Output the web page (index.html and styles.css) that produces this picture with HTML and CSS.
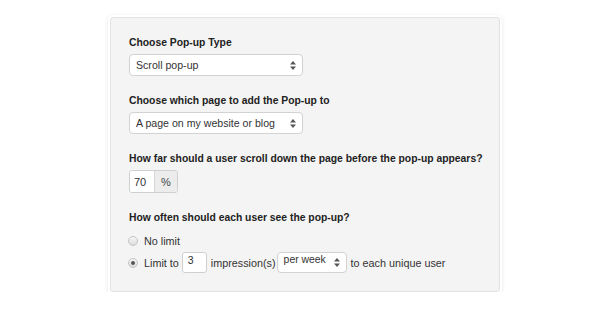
FILE: index.html
```html
<!DOCTYPE html>
<html>
<head>
<meta charset="utf-8">
<link rel="stylesheet" href="styles.css">
</head>
<body>
<div class="card">
  <div class="group">
    <div class="label">Choose Pop-up Type</div>
    <div class="select wide">
      <span class="select-text">Scroll pop-up</span>
      <svg class="arrows" width="6" height="9" viewBox="0 0 6 9"><path d="M3 0 L6 3.5 L0 3.5 Z M3 9 L6 5.5 L0 5.5 Z" fill="#555"/></svg>
    </div>
  </div>
  <div class="group">
    <div class="label">Choose which page to add the Pop-up to</div>
    <div class="select wide">
      <span class="select-text">A page on my website or blog</span>
      <svg class="arrows" width="6" height="9" viewBox="0 0 6 9"><path d="M3 0 L6 3.5 L0 3.5 Z M3 9 L6 5.5 L0 5.5 Z" fill="#555"/></svg>
    </div>
  </div>
  <div class="group">
    <div class="label">How far should a user scroll down the page before the pop-up appears?</div>
    <div class="input-group">
      <span class="ig-input">70</span>
      <span class="ig-addon">%</span>
    </div>
  </div>
  <div class="group last">
    <div class="label radios-label">How often should each user see the pop-up?</div>
    <div class="radio-row first">
      <span class="radio"></span>
      <span class="rtext">No limit</span>
    </div>
    <div class="radio-row">
      <span class="radio checked"></span>
      <span class="rtext">Limit to</span>
      <span class="small-input">3</span>
      <span class="rtext">impression(s)</span>
      <div class="select narrow">
        <span class="select-text up">per week</span>
        <svg class="arrows" width="6" height="9" viewBox="0 0 6 9"><path d="M3 0 L6 3.5 L0 3.5 Z M3 9 L6 5.5 L0 5.5 Z" fill="#555"/></svg>
      </div>
      <span class="rtext">to each unique user</span>
    </div>
  </div>
</div>
</body>
</html>
```
FILE: styles.css
```css
* { box-sizing: border-box; }
body {
  margin: 0;
  background: #fff;
  font-family: "Liberation Sans", Arial, Helvetica, sans-serif;
  color: #333;
}
.card {
  margin: 17px 0 0 110px;
  width: 390px;
  height: 275px;
  background: #f4f4f4;
  border: 1px solid #e2e2e2;
  border-radius: 3px;
  box-shadow: 0 0 0 2px #fff, 0 1px 4px 2px rgba(0,0,0,0.10);
  padding: 18px 0 0 18px;
}
.group { margin-bottom: 18px; }
.group.last { margin-bottom: 0; }
.label {
  font-size: 10.35px;
  font-weight: bold;
  line-height: 14px;
  color: #222;
  margin-bottom: 4px;
}
.radios-label { margin-bottom: 8px; }
.select {
  position: relative;
  display: flex;
  align-items: center;
  height: 22px;
  background: #fff;
  border: 1px solid #d2d2d2;
  border-radius: 4px;
  padding-left: 6px;
  font-size: 10.6px;
  color: #333;
}
.select.wide { width: 174px; }
.select.narrow {
  width: 70px;
  height: 21px;
  margin: 0 4px 0 1px;
}
.select-text.up { position: relative; top: -3px; font-size: 10.4px; }
.arrows {
  position: absolute;
  right: 6px;
  top: 50%;
  margin-top: -4.5px;
}
.input-group {
  display: flex;
  width: 49px;
  height: 23px;
  border: 1px solid #d0d0d0;
  border-radius: 3px;
  overflow: hidden;
  font-size: 11px;
}
.ig-input {
  width: 25px;
  background: #fff;
  display: flex;
  align-items: center;
  padding-left: 4px;
  border-right: 1px solid #d6d6d6;
}
.ig-addon {
  flex: 1;
  background: #ececec;
  display: flex;
  align-items: center;
  justify-content: center;
  color: #444;
}
.radio-row {
  display: flex;
  align-items: center;
  height: 21px;
  font-size: 10.8px;
  color: #333;
}
.radio-row.first { height: 16px; margin-bottom: 3px; }
.radio {
  width: 10px;
  height: 10px;
  border-radius: 50%;
  border: 1px solid #c4c4c4;
  background: linear-gradient(#f6f6f6, #dcdcdc);
  margin: 0 6px 0 -1px;
  position: relative;
}
.radio.checked::after {
  content: "";
  position: absolute;
  left: 2px;
  top: 2px;
  width: 4px;
  height: 4px;
  border-radius: 50%;
  background: #555;
}
.small-input {
  width: 25px;
  height: 21px;
  background: #fff;
  border: 1px solid #d0d0d0;
  border-radius: 3px;
  padding: 1px 0 0 5px;
  font-size: 10.5px;
  line-height: 12px;
  margin: 0 4px 0 3px;
}
```
